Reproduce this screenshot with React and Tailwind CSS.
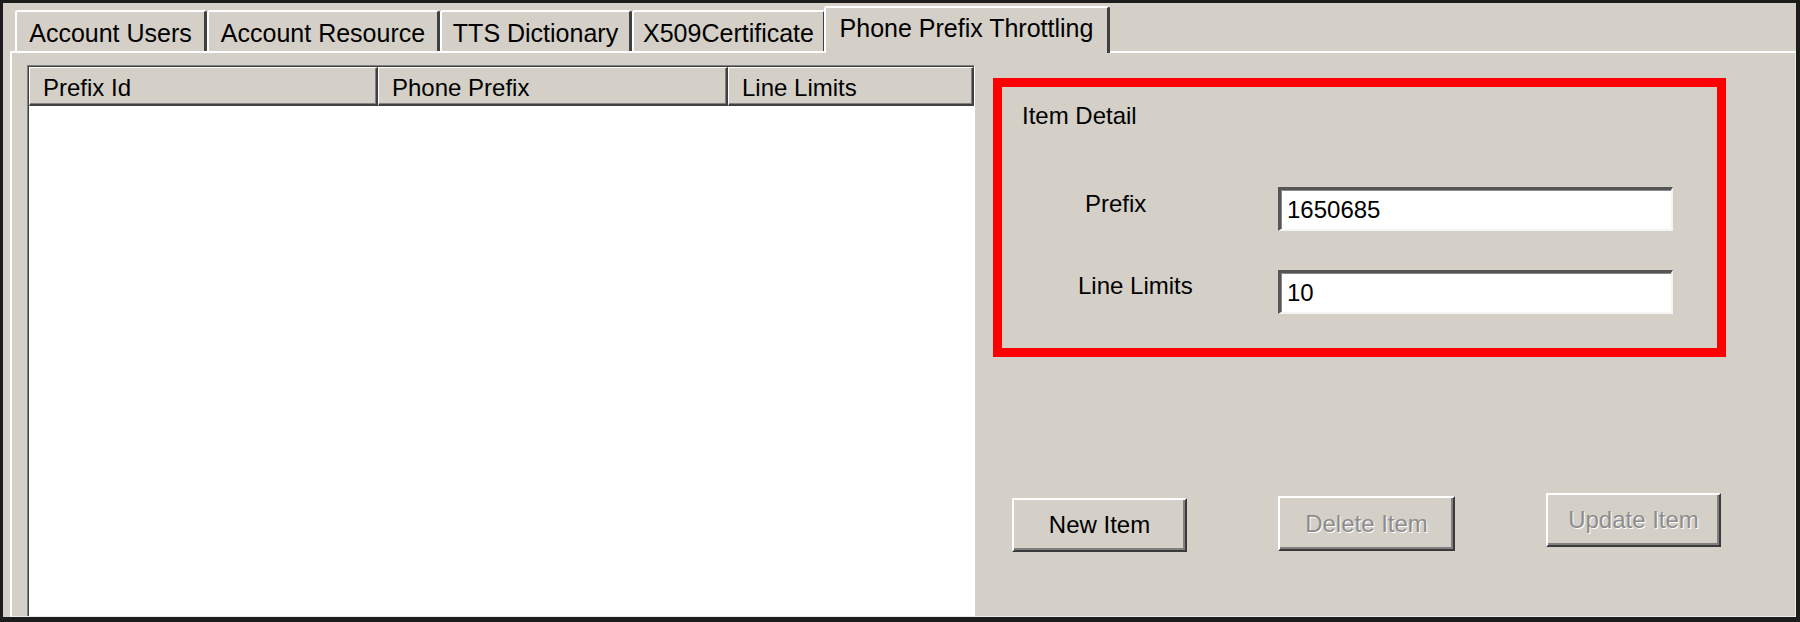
const tabs = [
  { label: "Account Users", width: "w-[192px]" },
  { label: "Account Resource", width: "w-[233px]" },
  { label: "TTS Dictionary", width: "w-[192px]" },
  { label: "X509Certificate", width: "w-[194px]" },
  { label: "Phone Prefix Throttling", width: "w-[286px]", active: true },
];

const columns = [
  { label: "Prefix Id", width: "w-[349px]" },
  { label: "Phone Prefix", width: "w-[350px]" },
  { label: "Line Limits", width: "flex-1" },
];

function Tab({ label, width, active }) {
  if (active) {
    return (
      <div
        className={`relative z-10 -mb-[2px] -ml-[2px] h-[47px] ${width} rounded-t-[3px] border-t-2 border-l-2 border-r-[3px] border-white border-r-[#404040] bg-[#d4d0c8] pt-[5px] text-center text-[25px] leading-[30px] whitespace-nowrap`}
      >
        {label}
      </div>
    );
  }
  return (
    <div
      className={`h-[41px] ${width} rounded-t-[3px] border-t-2 border-l-2 border-r-[3px] border-white border-r-[#404040] bg-[#d4d0c8] pt-[6px] text-center text-[25px] leading-[30px] whitespace-nowrap`}
    >
      {label}
    </div>
  );
}

function Field({ label, value, labelPad, labelTop }) {
  return (
    <div className="flex items-start">
      <div className={`w-[276px] ${labelPad} ${labelTop} text-[24px] leading-[28px]`}>{label}</div>
      <div className="flex h-[44px] w-[395px] items-center border-t-[3px] border-l-[3px] border-[#555555] border-r-2 border-b-2 border-r-[#f4f4f4] border-b-[#f4f4f4] bg-white pl-[6px] text-[24px] leading-[39px] shadow-[inset_1px_1px_0_#8a8a8a]">
        {value}
      </div>
    </div>
  );
}

function Button({ label, disabled, className }) {
  return (
    <button
      type="button"
      disabled={disabled}
      className={`flex items-center justify-center border-t-2 border-l-2 border-white border-r-2 border-b-2 border-r-[#3a3a3a] border-b-[#3a3a3a] bg-[#d4d0c8] text-[24px] leading-[28px] shadow-[inset_-2px_-2px_0_#808080] ${
        disabled ? "text-[#8c8c8c] [text-shadow:1px_1px_0_#ffffff]" : "text-black"
      } ${className}`}
    >
      {label}
    </button>
  );
}

export default function App() {
  return (
    <div className="flex h-[622px] w-[1800px] flex-col overflow-hidden border-t-[3px] border-l-[3px] border-r-[4px] border-b-[5px] border-[#1c1c1c] bg-[#d4d0c8] font-['Liberation_Sans',Arial,sans-serif] text-black">
      <div className="flex h-[48px] shrink-0 items-end pl-[12px]">
        {tabs.map((tab) => (
          <Tab key={tab.label} {...tab} />
        ))}
      </div>

      <div className="ml-[7px] flex min-h-0 flex-1 border-t-2 border-l-2 border-white border-r border-b border-r-[#ececec] border-b-[#ececec]">
        {/* list view */}
        <div className="ml-[15px] mt-[12px] flex w-[948px] flex-col border-t border-l border-[#808080] border-r border-r-white">
          <div className="flex flex-1 flex-col border-t border-l border-[#404040] bg-white">
            <div className="flex h-[39px] shrink-0 bg-[#d4d0c8]">
              {columns.map((col) => (
                <div
                  key={col.label}
                  className={`${col.width} border-t border-l border-white border-r-2 border-b-2 border-r-[#404040] border-b-[#404040] pl-[13px] pt-[6px] text-[24px] leading-[28px] shadow-[inset_-1px_-1px_0_#808080] whitespace-nowrap`}
                >
                  {col.label}
                </div>
              ))}
            </div>
          </div>
        </div>

        {/* detail side */}
        <div className="ml-[18px] mt-[25px] flex w-[733px] flex-col">
          <div className="h-[279px] border-[9px] border-[#ff0000] pl-[20px] pt-[15px]">
            <div className="text-[24px] leading-[28px]">Item Detail</div>
            <div className="-ml-[20px] mt-[57px] flex flex-col gap-[39px]">
              <Field label="Prefix" value="1650685" labelPad="pl-[83px]" labelTop="mt-[3px]" />
              <Field label="Line Limits" value="10" labelPad="pl-[76px]" labelTop="mt-[2px]" />
            </div>
          </div>

          <div className="mt-[136px] flex items-start">
            <Button label="New Item" className="ml-[19px] mt-[5px] h-[54px] w-[175px]" />
            <Button label="Delete Item" disabled className="ml-[91px] mt-[3px] h-[55px] w-[177px]" />
            <Button label="Update Item" disabled className="ml-[91px] h-[54px] w-[175px]" />
          </div>
        </div>
      </div>
    </div>
  );
}
